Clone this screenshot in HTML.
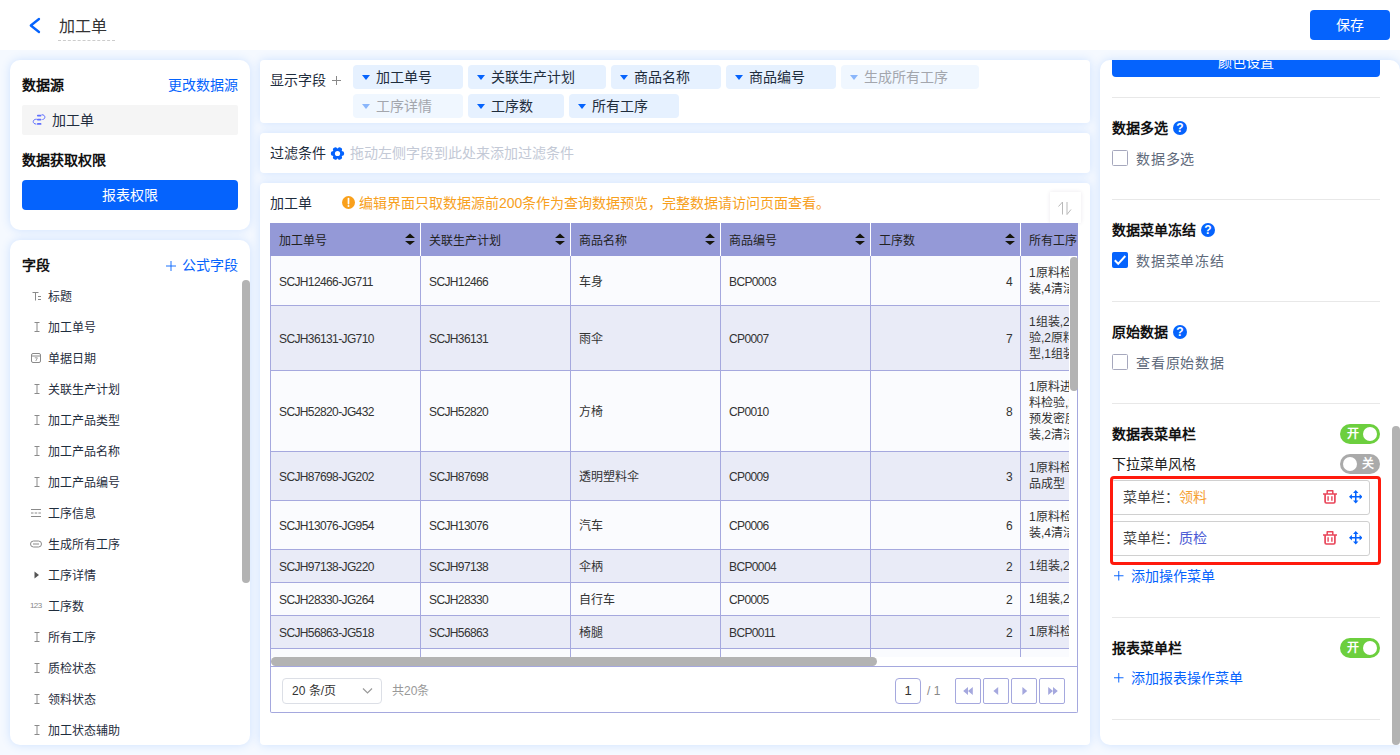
<!DOCTYPE html>
<html lang="zh-CN">
<head>
<meta charset="utf-8">
<title>加工单</title>
<style>
*{box-sizing:border-box;margin:0;padding:0}
html,body{width:1400px;height:755px;overflow:hidden}
body{font-family:"Liberation Sans",sans-serif;font-size:14px;color:#1f2d3d;background:#f5f9ff;position:relative}
.abs{position:absolute}
.hdr{position:absolute;left:0;top:0;width:1400px;height:50px;background:#fff}
.panel{position:absolute;background:#fff;box-shadow:0 0 10px rgba(40,130,255,.19)}
.blue{color:#0563fd}
.b{font-weight:bold}
.btn{position:absolute;background:#0563fd;color:#fff;border-radius:4px;text-align:center;font-size:14px}
.t{position:absolute;white-space:nowrap;line-height:20px;height:20px}
/* left field list */
.fld{position:absolute;left:38px;font-size:12px;line-height:16px;height:16px;color:#1f2d3d;white-space:nowrap}
.fic{position:absolute;left:19px;width:14px;height:14px;overflow:visible}
/* tags */
.tag{position:absolute;height:24px;background:#e6f1ff;border-radius:4px;font-size:14px;line-height:24px;color:#1f2d3d;padding-left:23px;white-space:nowrap}
.tag:before{content:"";position:absolute;left:9px;top:10px;border-left:4px solid transparent;border-right:4px solid transparent;border-top:5px solid #0563fd}
.tag.dis{background:#f0f7ff;color:#a3a6ad}
.tag.dis:before{border-top-color:#8ab6fb}
/* table */
.tbl{position:absolute;left:270px;top:223px;width:808px;height:490px;border:1px solid #a5a8de;border-top:none;border-radius:0 0 2px 2px}
.th{position:absolute;top:0;height:33px;background:#9499d7;font-size:12px;line-height:16px;padding:10px 0 0 8px;color:#222;border-right:1px solid #fff;white-space:nowrap;overflow:hidden}
.row{position:absolute;left:0;width:799px;border-bottom:1px solid #a5a8de;overflow:hidden}
.row.o{background:#fafbfe}
.row.e{background:#e9ebf7}
.c{position:absolute;top:0;bottom:0;width:150px;border-right:1px solid #a5a8de;font-size:12px;line-height:16px;color:#333;padding:2px 8px 0;display:flex;align-items:center;white-space:nowrap}
.c.l{letter-spacing:-.62px;padding-top:2px}
.c.r{justify-content:flex-end}
.c.w{white-space:normal;line-height:16px;border-right:none;width:60px;overflow:hidden;padding-right:0;padding-top:0}
.sort{position:absolute;right:5px;top:10px;width:10px;height:12px}
.pgb{position:absolute;top:455px;width:26px;height:26px;border:1px solid #a5a8de;border-radius:2px;background:#fff}
/* right panel */
.hr{position:absolute;left:12px;width:268px;height:1px;background:#e8e8e8}
.rt{position:absolute;left:12px;font-size:14px;font-weight:bold;color:#111;line-height:20px;white-space:nowrap}
.q{position:absolute;width:14px;height:14px;border-radius:50%;background:#0563fd;color:#fff;font-size:12px;font-weight:bold;line-height:15px;text-align:center}
.cb{position:absolute;left:12px;width:16px;height:16px;border:1px solid #a6a8bd;border-radius:1.500px;background:#fff}
.cb.on{background:#0563fd;border-color:#0563fd}
.cl{position:absolute;left:36px;font-size:14px;color:#606a7b;letter-spacing:.75px;line-height:20px;white-space:nowrap}
.sw{position:absolute;left:240px;width:40px;height:20px;border-radius:10px;background:#6ccf3e;color:#fff;font-size:12px;font-weight:bold;line-height:20px}
.sw i{position:absolute;top:3px;right:3px;width:14px;height:14px;border-radius:50%;background:#fff}
.sw span{position:absolute;left:7px;top:0}
.sw.off{background:#aaa}
.sw.off i{left:3px;right:auto}
.sw.off span{left:auto;right:6px}
.mi{position:absolute;left:11px;width:259px;height:35px;border:1px solid #d0d0d0;border-radius:3px;background:#fff;font-size:14px;line-height:33px;padding-left:11px;color:#444;white-space:nowrap}
</style>
</head>
<body>
<!-- HEADER -->
<div class="hdr">
  <svg class="abs" style="left:28px;top:17px" width="14" height="18" viewBox="0 0 14 18"><path d="M11 2 L2.800 8.500 L11 15" fill="none" stroke="#0563fd" stroke-width="2.300" stroke-linecap="round" stroke-linejoin="round"/></svg>
  <div class="t" style="left:58px;top:17px;font-size:16px;color:#333;border-bottom:1px dashed #ccc;height:24px;padding:0 8px 0 1px">加工单</div>
  <div class="btn" style="left:1310px;top:10px;width:80px;height:30px;line-height:30px">保存</div>
</div>

<!-- LEFT 1 -->
<div class="panel" id="L1" style="left:10px;top:60px;width:240px;height:170px;border-radius:10px">
  <div class="t b" style="left:12px;top:15px;color:#111">数据源</div>
  <div class="t blue" style="right:12px;top:15px">更改数据源</div>
  <div class="abs" style="left:12px;top:45px;width:216px;height:30px;background:#f5f5f5;border-radius:2px"></div>
  <svg class="abs" style="left:22px;top:53px" width="14" height="13" viewBox="0 0 14 13"><g fill="none" stroke="#5f6fff" stroke-linecap="round"><path d="M5.800 2.600h2.800M5.800 6.600h2.800M5.800 10.900h2.800" stroke-width="1.700"/><path d="M10 1.700c3.600-.2 4 4.400 .8 4.800" stroke-width="1"/><path d="M4.400 6.200c-4.200-.2-4.400 4.800-.4 4.900" stroke-width="1"/></g></svg>
  <div class="t" style="left:42px;top:50px;color:#1f2d3d">加工单</div>
  <div class="t b" style="left:12px;top:90px;color:#111">数据获取权限</div>
  <div class="btn" style="left:12px;top:120px;width:216px;height:30px;line-height:30px">报表权限</div>
</div>

<!-- LEFT 2 -->
<div class="panel" id="L2" style="left:10px;top:240px;width:240px;height:505px;border-radius:10px;overflow:hidden">
  <div class="t b" style="left:12px;top:15px;color:#111">字段</div>
  <svg class="abs" style="left:155.500px;top:20.500px" width="10" height="10" viewBox="0 0 11 11"><path d="M5.500 0v11M0 5.500h11" stroke="#0563fd" stroke-width="1"/></svg>
  <div class="t blue" style="right:12px;top:15px">公式字段</div>
  <svg class="fic" style="top:49px" viewBox="0 0 14 14"><path d="M3.500 3.500h6M6.500 3.500v8M9 7.500h3M9 10.500h3" fill="none" stroke="#8a8a8a" stroke-width="1"/></svg>
  <div class="fld" style="top:49px">标题</div>
  <svg class="fic" style="top:80px" viewBox="0 0 14 14"><path d="M5.5 2.5h5M5.500 11.500h5M8 2.500v9" fill="none" stroke="#8a8a8a" stroke-width="1"/></svg>
  <div class="fld" style="top:80px">加工单号</div>
  <svg class="fic" style="top:111px" viewBox="0 0 14 14"><rect x="2.500" y="2.500" width="9" height="9" rx="1.500" fill="none" stroke="#8a8a8a"/><path d="M2.500 5h9" stroke="#8a8a8a"/><path d="M5.800 6.800h2.600l-1.600 3.200" fill="none" stroke="#8a8a8a" stroke-width=".8"/></svg>
  <div class="fld" style="top:111px">单据日期</div>
  <svg class="fic" style="top:142px" viewBox="0 0 14 14"><path d="M5.5 2.5h5M5.500 11.500h5M8 2.500v9" fill="none" stroke="#8a8a8a" stroke-width="1"/></svg>
  <div class="fld" style="top:142px">关联生产计划</div>
  <svg class="fic" style="top:173px" viewBox="0 0 14 14"><path d="M5.5 2.5h5M5.500 11.500h5M8 2.500v9" fill="none" stroke="#8a8a8a" stroke-width="1"/></svg>
  <div class="fld" style="top:173px">加工产品类型</div>
  <svg class="fic" style="top:204px" viewBox="0 0 14 14"><path d="M5.5 2.5h5M5.500 11.500h5M8 2.500v9" fill="none" stroke="#8a8a8a" stroke-width="1"/></svg>
  <div class="fld" style="top:204px">加工产品名称</div>
  <svg class="fic" style="top:235px" viewBox="0 0 14 14"><path d="M5.5 2.5h5M5.500 11.500h5M8 2.500v9" fill="none" stroke="#8a8a8a" stroke-width="1"/></svg>
  <div class="fld" style="top:235px">加工产品编号</div>
  <svg class="fic" style="top:266px" viewBox="0 0 14 14"><path d="M2 3.500h10M2 10.500h10" stroke="#8a8a8a"/><path d="M2 7h10" stroke="#8a8a8a" stroke-dasharray="2.500 1.200"/></svg>
  <div class="fld" style="top:266px">工序信息</div>
  <svg class="fic" style="top:297px" viewBox="0 0 14 14"><rect x="1.500" y="4" width="11" height="6" rx="3" fill="none" stroke="#8a8a8a"/><path d="M4 7h6" stroke="#8a8a8a"/></svg>
  <div class="fld" style="top:297px">生成所有工序</div>
  <svg class="fic" style="top:328px" viewBox="0 0 14 14"><path d="M5.500 3.500l4.500 3.500l-4.500 3.500z" fill="#555"/></svg>
  <div class="fld" style="top:328px">工序详情</div>
  <div class="abs" style="left:20px;top:359px;font-size:8px;line-height:14px;color:#888;letter-spacing:-.6px">123</div>
  <div class="fld" style="top:359px">工序数</div>
  <svg class="fic" style="top:390px" viewBox="0 0 14 14"><path d="M5.5 2.5h5M5.500 11.500h5M8 2.500v9" fill="none" stroke="#8a8a8a" stroke-width="1"/></svg>
  <div class="fld" style="top:390px">所有工序</div>
  <svg class="fic" style="top:421px" viewBox="0 0 14 14"><path d="M5.5 2.5h5M5.500 11.500h5M8 2.500v9" fill="none" stroke="#8a8a8a" stroke-width="1"/></svg>
  <div class="fld" style="top:421px">质检状态</div>
  <svg class="fic" style="top:452px" viewBox="0 0 14 14"><path d="M5.5 2.5h5M5.500 11.500h5M8 2.500v9" fill="none" stroke="#8a8a8a" stroke-width="1"/></svg>
  <div class="fld" style="top:452px">领料状态</div>
  <svg class="fic" style="top:483px" viewBox="0 0 14 14"><path d="M5.5 2.5h5M5.500 11.500h5M8 2.500v9" fill="none" stroke="#8a8a8a" stroke-width="1"/></svg>
  <div class="fld" style="top:483px">加工状态辅助</div>
  <div class="abs" style="left:232px;top:40px;width:8px;height:303px;border-radius:4px;background:#b3b3b3"></div>
</div>

<!-- MID 1 -->
<div class="panel" id="M1" style="left:260px;top:60px;width:830px;height:63px;border-radius:4px">
  <div class="t" style="left:10px;top:10px">显示字段</div>
  <svg class="abs" style="left:72px;top:16px" width="9" height="9" viewBox="0 0 9 9"><path d="M4.500 0v9M0 4.500h9" stroke="#888" stroke-width="1"/></svg>
  <div class="tag" style="left:93px;top:5px;width:110px">加工单号</div>
  <div class="tag" style="left:208px;top:5px;width:138px">关联生产计划</div>
  <div class="tag" style="left:351px;top:5px;width:110px">商品名称</div>
  <div class="tag" style="left:466px;top:5px;width:110px">商品编号</div>
  <div class="tag dis" style="left:581px;top:5px;width:138px">生成所有工序</div>
  <div class="tag dis" style="left:93px;top:34px;width:110px">工序详情</div>
  <div class="tag" style="left:208px;top:34px;width:96px">工序数</div>
  <div class="tag" style="left:309px;top:34px;width:110px">所有工序</div>
</div>

<!-- MID 2 -->
<div class="panel" id="M2" style="left:260px;top:133px;width:830px;height:40px;border-radius:4px">
  <div class="t" style="left:10px;top:10px">过滤条件</div>
  <svg class="abs" style="left:70px;top:13px" width="15" height="15" viewBox="-7.500 -7.500 15 15"><g fill="#0563fd" transform="rotate(90)"><circle r="5"/><g id="tt"><rect x="-2.200" y="-6.600" width="4.400" height="13.200" rx="1.600"/></g><rect x="-2.200" y="-6.600" width="4.400" height="13.200" rx="1.600" transform="rotate(60)"/><rect x="-2.200" y="-6.600" width="4.400" height="13.200" rx="1.600" transform="rotate(120)"/></g><circle r="2.600" fill="#fff"/></svg>
  <div class="t" style="left:90px;top:10px;color:#c3c9d6">拖动左侧字段到此处来添加过滤条件</div>
</div>

<!-- MID 3 -->
<div class="panel" id="M3" style="left:260px;top:183px;width:830px;height:562px;border-radius:4px">
  <div class="t" style="left:10px;top:10px">加工单</div>
  <svg class="abs" style="left:82px;top:13px" width="13" height="13" viewBox="0 0 13 13"><circle cx="6.500" cy="6.500" r="6.500" fill="#f9a01b"/><path d="M6.500 2.600v5" stroke="#fff" stroke-width="1.700" stroke-linecap="round"/><circle cx="6.500" cy="10" r="1" fill="#fff"/></svg>
  <div class="abs" style="left:790px;top:9px;width:31px;height:31px;background:#fff;box-shadow:0 0 4px rgba(60,40,90,.10)"><svg class="abs" style="left:8px;top:9px" width="14" height="14" viewBox="0 0 14 14"><path d="M.5 5.500L4.500 1v12.500M9 1v12.500l4-5" fill="none" stroke="#b9b9b9" stroke-width="1"/></svg></div>
  <div class="t" style="left:99px;top:10px;color:#f7a01d">编辑界面只取数据源前200条作为查询数据预览，完整数据请访问页面查看。</div>
</div>

<!-- TABLE -->
<div class="tbl" id="T">
  <div class="th" style="left:-1px;width:151px;padding-left:9px">加工单号<svg class="sort" viewBox="0 0 10 12"><path d="M5 .5L10 5H0zM0 8h10L5 12z" fill="#15150a"/></svg></div>
  <div class="th" style="left:150px;width:150px">关联生产计划<svg class="sort" viewBox="0 0 10 12"><path d="M5 .5L10 5H0zM0 8h10L5 12z" fill="#15150a"/></svg></div>
  <div class="th" style="left:300px;width:150px">商品名称<svg class="sort" viewBox="0 0 10 12"><path d="M5 .5L10 5H0zM0 8h10L5 12z" fill="#15150a"/></svg></div>
  <div class="th" style="left:450px;width:150px">商品编号<svg class="sort" viewBox="0 0 10 12"><path d="M5 .5L10 5H0zM0 8h10L5 12z" fill="#15150a"/></svg></div>
  <div class="th" style="left:600px;width:150px">工序数<svg class="sort" viewBox="0 0 10 12"><path d="M5 .5L10 5H0zM0 8h10L5 12z" fill="#15150a"/></svg></div>
  <div class="th" style="left:750px;width:57px;border-right:none">所有工序</div>
  <div class="abs" id="TB" style="left:0;top:33px;width:798px;height:401px;overflow:hidden">
    <div class="row o" style="top:0px;height:50px">
      <div class="c l" style="left:0px">SCJH12466-JG711</div>
      <div class="c l" style="left:150px">SCJH12466</div>
      <div class="c" style="left:300px">车身</div>
      <div class="c l" style="left:450px">BCP0003</div>
      <div class="c r l" style="left:600px">4</div>
      <div class="c w" style="left:750px"><div><div style="white-space:nowrap">1原料检验,2组</div><div style="white-space:nowrap">装,4清洁,5包装</div></div></div>
    </div>
    <div class="row e" style="top:50px;height:65px">
      <div class="c l" style="left:0px">SCJH36131-JG710</div>
      <div class="c l" style="left:150px">SCJH36131</div>
      <div class="c" style="left:300px">雨伞</div>
      <div class="c l" style="left:450px">CP0007</div>
      <div class="c r l" style="left:600px">7</div>
      <div class="c w" style="left:750px"><div><div style="white-space:nowrap">1组装,2质检</div><div style="white-space:nowrap">验,2原料检</div><div style="white-space:nowrap">型,1组装,2</div></div></div>
    </div>
    <div class="row o" style="top:115px;height:81px">
      <div class="c l" style="left:0px">SCJH52820-JG432</div>
      <div class="c l" style="left:150px">SCJH52820</div>
      <div class="c" style="left:300px">方椅</div>
      <div class="c l" style="left:450px">CP0010</div>
      <div class="c r l" style="left:600px">8</div>
      <div class="c w" style="left:750px"><div><div style="white-space:nowrap">1原料进料</div><div style="white-space:nowrap">料检验,2</div><div style="white-space:nowrap">预发密度</div><div style="white-space:nowrap">装,2清洁</div></div></div>
    </div>
    <div class="row e" style="top:196px;height:49px">
      <div class="c l" style="left:0px">SCJH87698-JG202</div>
      <div class="c l" style="left:150px">SCJH87698</div>
      <div class="c" style="left:300px">透明塑料伞</div>
      <div class="c l" style="left:450px">CP0009</div>
      <div class="c r l" style="left:600px">3</div>
      <div class="c w" style="left:750px"><div><div style="white-space:nowrap">1原料检验</div><div style="white-space:nowrap">品成型</div></div></div>
    </div>
    <div class="row o" style="top:245px;height:49px">
      <div class="c l" style="left:0px">SCJH13076-JG954</div>
      <div class="c l" style="left:150px">SCJH13076</div>
      <div class="c" style="left:300px">汽车</div>
      <div class="c l" style="left:450px">CP0006</div>
      <div class="c r l" style="left:600px">6</div>
      <div class="c w" style="left:750px"><div><div style="white-space:nowrap">1原料检验</div><div style="white-space:nowrap">装,4清洁</div></div></div>
    </div>
    <div class="row e" style="top:294px;height:33px">
      <div class="c l" style="left:0px">SCJH97138-JG220</div>
      <div class="c l" style="left:150px">SCJH97138</div>
      <div class="c" style="left:300px">伞柄</div>
      <div class="c l" style="left:450px">BCP0004</div>
      <div class="c r l" style="left:600px">2</div>
      <div class="c w" style="left:750px"><div><div style="white-space:nowrap">1组装,2质检</div></div></div>
    </div>
    <div class="row o" style="top:327px;height:33px">
      <div class="c l" style="left:0px">SCJH28330-JG264</div>
      <div class="c l" style="left:150px">SCJH28330</div>
      <div class="c" style="left:300px">自行车</div>
      <div class="c l" style="left:450px">CP0005</div>
      <div class="c r l" style="left:600px">2</div>
      <div class="c w" style="left:750px"><div><div style="white-space:nowrap">1组装,2质检</div></div></div>
    </div>
    <div class="row e" style="top:360px;height:33px">
      <div class="c l" style="left:0px">SCJH56863-JG518</div>
      <div class="c l" style="left:150px">SCJH56863</div>
      <div class="c" style="left:300px">椅腿</div>
      <div class="c l" style="left:450px">BCP0011</div>
      <div class="c r l" style="left:600px">2</div>
      <div class="c w" style="left:750px"><div><div style="white-space:nowrap">1原料检验</div></div></div>
    </div>
    <div class="row o" style="top:393px;height:33px">
      <div class="c" style="left:0px"></div>
      <div class="c" style="left:150px"></div>
      <div class="c" style="left:300px"></div>
      <div class="c" style="left:450px"></div>
      <div class="c r" style="left:600px"></div>
      <div class="c w" style="left:750px"><div><div style="white-space:nowrap"></div></div></div>
    </div>
  </div>
  <div class="abs" style="left:799px;top:34px;width:8px;height:134px;border-radius:4px;background:#b3b3b3"></div>
  <div class="abs" style="left:0;top:434px;width:606px;height:9px;border-radius:4.5px;background:#b3b3b3"></div>
  <div class="abs" style="left:0;top:443px;width:807px;height:1px;background:#a5a8de"></div>
  <div class="abs" style="left:11px;top:455px;width:100px;height:26px;border:1px solid #dcdfe6;border-radius:4px;font-size:12px;line-height:24px;padding-left:9px;color:#333">20 条/页<svg class="abs" style="left:79px;top:8px" width="11" height="8" viewBox="0 0 11 8"><path d="M1 1.500l4.500 4.500l4.500-4.500" fill="none" stroke="#9a9a9a" stroke-width="1.200"/></svg></div>
  <div class="abs" style="left:121px;top:455px;font-size:12px;line-height:26px;color:#999">共20条</div>
  <div class="pgb" style="left:624px;border-radius:4px;font-size:13px;line-height:24px;text-align:center;color:#333">1</div>
  <div class="abs" style="left:656px;top:455px;font-size:12px;line-height:26px;color:#888">/ 1</div>
  <div class="pgb" style="left:684px"><svg class="abs" style="left:7px;top:8px" width="10" height="8" viewBox="0 0 12 10"><path d="M6 0v10L0 5zM12 0v10L6 5z" fill="#a5a8de"/></svg></div>
  <div class="pgb" style="left:712px"><svg class="abs" style="left:9px;top:8px" width="5.600" height="8" viewBox="0 0 7 10"><path d="M6.500 0v10L.5 5z" fill="#a5a8de"/></svg></div>
  <div class="pgb" style="left:740px"><svg class="abs" style="left:10px;top:8px" width="5.600" height="8" viewBox="0 0 7 10"><path d="M.5 0v10l6-5z" fill="#a5a8de"/></svg></div>
  <div class="pgb" style="left:768px"><svg class="abs" style="left:8px;top:8px" width="10" height="8" viewBox="0 0 12 10"><path d="M0 0v10l6-5zM6 0v10l6-5z" fill="#a5a8de"/></svg></div>
</div>

<!-- RIGHT -->
<div class="panel" id="R" style="left:1100px;top:60px;width:300px;height:685px;border-radius:10px 10px 0 10px;overflow:hidden">
  <div class="btn" style="left:12px;top:-13px;width:268px;height:30px;line-height:31px">颜色设置</div>
  <div class="hr" style="top:37px"></div>
  <div class="rt" style="top:58px">数据多选</div><div class="q" style="left:73px;top:61px">?</div>
  <div class="cb" style="top:90px"></div><div class="cl" style="top:89px">数据多选</div>
  <div class="hr" style="top:139px"></div>
  <div class="rt" style="top:160px">数据菜单冻结</div><div class="q" style="left:101px;top:163px">?</div>
  <div class="cb on" style="top:192px"><svg class="abs" style="left:-1px;top:-1px" width="16" height="16" viewBox="0 0 16 16"><path d="M2.800 8.300l3.400 3.500L13.300 4" fill="none" stroke="#fff" stroke-width="2"/></svg></div><div class="cl" style="top:191px">数据菜单冻结</div>
  <div class="hr" style="top:241px"></div>
  <div class="rt" style="top:262px">原始数据</div><div class="q" style="left:73px;top:265px">?</div>
  <div class="cb" style="top:294px"></div><div class="cl" style="top:293px">查看原始数据</div>
  <div class="hr" style="top:343px"></div>
  <div class="rt" style="top:364px">数据表菜单栏</div>
  <div class="sw" style="top:364px"><span>开</span><i></i></div>
  <div class="rt" style="top:394px;font-weight:normal;color:#222">下拉菜单风格</div>
  <div class="sw off" style="top:394px"><i></i><span>关</span></div>
  <div class="mi" style="top:420px">菜单栏：<span style="color:#f5a033">领料</span><svg class="abs" style="left:211px;top:9px" width="14" height="14" viewBox="0 0 14 14"><g fill="none" stroke="#e9465a" stroke-linejoin="round"><path d="M0 4h14" stroke-width="1.500"/><path d="M4.200 4V.8h5.600V4" stroke-width="1.500"/><path d="M2.100 4v7.800a1.200 1.200 0 0 0 1.200 1.200h7.400a1.200 1.200 0 0 0 1.200-1.200V4" stroke-width="1.700"/><path d="M5.100 6.300v4.400M8.900 6.300v4.400" stroke-width="1.400"/></g></svg><svg class="abs" style="left:236.500px;top:9px" width="13.500" height="13.500" viewBox="0 0 14 14"><path d="M7 2v10M2 7h10" stroke="#0563fd" stroke-width="1.600"/><path d="M7 0l2.800 3h-5.600zM7 14l2.800-3h-5.600zM0 7l3-2.800v5.600zM14 7l-3-2.800v5.600z" fill="#0563fd"/></svg></div>
  <div class="mi" style="top:461px">菜单栏：<span style="color:#4a5ad4">质检</span><svg class="abs" style="left:211px;top:9px" width="14" height="14" viewBox="0 0 14 14"><g fill="none" stroke="#e9465a" stroke-linejoin="round"><path d="M0 4h14" stroke-width="1.500"/><path d="M4.200 4V.8h5.600V4" stroke-width="1.500"/><path d="M2.100 4v7.800a1.200 1.200 0 0 0 1.200 1.200h7.400a1.200 1.200 0 0 0 1.200-1.200V4" stroke-width="1.700"/><path d="M5.100 6.300v4.400M8.900 6.300v4.400" stroke-width="1.400"/></g></svg><svg class="abs" style="left:236.500px;top:9px" width="13.500" height="13.500" viewBox="0 0 14 14"><path d="M7 2v10M2 7h10" stroke="#0563fd" stroke-width="1.600"/><path d="M7 0l2.800 3h-5.600zM7 14l2.800-3h-5.600zM0 7l3-2.800v5.600zM14 7l-3-2.800v5.600z" fill="#0563fd"/></svg></div>
  <div class="abs" style="left:10px;top:416px;width:271px;height:89px;border:3px solid #ff1a0d;border-radius:4px"></div>
<svg class="abs" style="left:14px;top:511px" width="9.500" height="9.500" viewBox="0 0 11 11"><path d="M5.500 0v11M0 5.500h11" stroke="#0563fd" stroke-width="1.100"/></svg><div class="t blue" style="left:31px;top:506px">添加操作菜单</div>
  <div class="hr" style="top:557px"></div>
  <div class="rt" style="top:578px">报表菜单栏</div>
  <div class="sw" style="top:578px"><span>开</span><i></i></div>
<svg class="abs" style="left:14px;top:613px" width="9.500" height="9.500" viewBox="0 0 11 11"><path d="M5.500 0v11M0 5.500h11" stroke="#0563fd" stroke-width="1.100"/></svg><div class="t blue" style="left:31px;top:608px">添加报表操作菜单</div>
  <div class="hr" style="top:659px"></div>
  <div class="abs" style="left:292px;top:366px;width:8px;height:319px;border-radius:4px;background:#b3b3b3"></div>
</div>
</body>
</html>
